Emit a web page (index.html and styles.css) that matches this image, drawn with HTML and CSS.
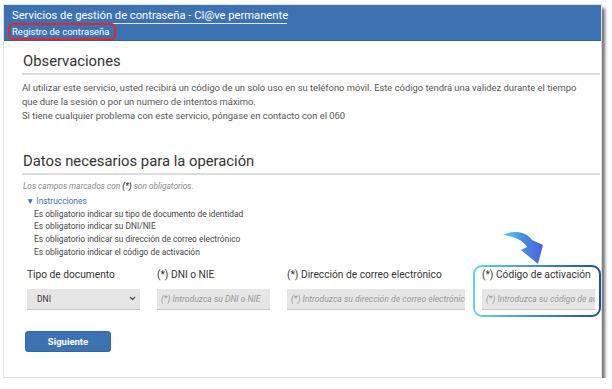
FILE: index.html
```html
<!DOCTYPE html>
<html lang="es">
<head>
    <meta charset="UTF-8">
    <title>Registro de contraseña</title>
    <link rel="stylesheet" href="styles.css">
</head>
<body>
    <div class="panel">
        <div class="header">
            <h1>Servicios de gestión de contraseña - Cl@ve permanente</h1>
            <span class="sub">Registro de contraseña</span>
        </div>
        <div class="content">
            <h2>Observaciones</h2>
            <p class="obs">Al utilizar este servicio, usted recibirá un código de un solo uso en su teléfono móvil. Este código tendrá una validez durante el tiempo<br>
            que dure la sesión o por un numero de intentos máximo.<br>
            Si tiene cualquier problema con este servicio, póngase en contacto con el 060</p>

            <h2 class="second">Datos necesarios para la operación</h2>
            <p class="note">Los campos marcados con <b>(*)</b> son obligatorios.</p>
            <div class="instr">
                <div class="instr-title">&#9660; Instrucciones</div>
                <ul>
                    <li>Es obligatorio indicar su tipo de documento de identidad</li>
                    <li>Es obligatorio indicar su DNI/NIE</li>
                    <li>Es obligatorio indicar su dirección de correo electrónico</li>
                    <li>Es obligatorio indicar el código de activación</li>
                </ul>
            </div>

            <div class="fields">
                <div class="field">
                    <label>Tipo de documento</label>
                    <div class="select">DNI
                        <svg width="7" height="5" viewBox="0 0 7 5"><path d="M1 1 L3.5 3.5 L6 1" fill="none" stroke="#555" stroke-width="1.4"/></svg>
                    </div>
                </div>
                <div class="field">
                    <label>(*) DNI o NIE</label>
                    <div class="input">(*) Introduzca su DNI o NIE</div>
                </div>
                <div class="field wide">
                    <label>(*) Dirección de correo electrónico</label>
                    <div class="input">(*) Introduzca su dirección de correo electrónico</div>
                </div>
                <div class="field mark">
                    <label>(*) Código de activación</label>
                    <div class="input">(*) Introduzca su código de activación</div>
                    <svg class="ring" width="128" height="52" viewBox="0 0 128 52">
                        <defs>
                            <linearGradient id="rg" x1="0" y1="0" x2="1" y2="0">
                                <stop offset="0" stop-color="#63d6e6"/>
                                <stop offset="1" stop-color="#1c4ea8"/>
                            </linearGradient>
                        </defs>
                        <rect x="1" y="1" width="126" height="50" rx="8" fill="none" stroke="url(#rg)" stroke-width="2"/>
                    </svg>
                    <svg class="arrow" width="50" height="40" viewBox="0 0 50 40">
                        <defs>
                            <linearGradient id="ag" x1="0" y1="0" x2="1" y2="0">
                                <stop offset="0" stop-color="#58d2e8"/>
                                <stop offset="0.5" stop-color="#4a8ee0"/>
                                <stop offset="1" stop-color="#4a5fdc"/>
                            </linearGradient>
                        </defs>
                        <path d="M5 7 C14 2 28 3 34 12 L45 17 L40 36 L23 22 L29 19 C24 11 14 8 5 7 Z" fill="url(#ag)"/>
                    </svg>
                </div>
            </div>

            <button class="btn">Siguiente</button>
        </div>
    </div>
</body>
</html>
```
FILE: styles.css
```css
body {
    margin: 0;
    padding: 4px 0 0 3px;
    background: #fff;
    font-family: Roboto, "Liberation Sans", sans-serif;
}
.panel {
    width: 597px;
    height: 372px;
    border: 1px solid #e2e2e2;
    background: #fff;
    box-shadow: 3px 4px 3px rgba(0, 0, 0, 0.55);
}
.header {
    background: #3d72b2;
    height: 36px;
    padding: 3px 0 0 4px;
    box-sizing: border-box;
    border-bottom: 1px solid #2f64a6;
}
.header h1 {
    margin: 0 0 0 4px;
    width: 275px;
    font-size: 11.2px;
    font-weight: 400;
    line-height: 15px;
    color: #fff;
    white-space: nowrap;
    border-bottom: 1px solid #dfe8f3;
}
.sub {
    display: block;
    width: fit-content;
    margin-top: -1px;
    padding: 0 4px 0 2px;
    border: 2px solid #e3262d;
    border-radius: 5px;
    font-size: 9.5px;
    line-height: 13px;
    color: #fff;
    white-space: nowrap;
}
.content {
    padding: 0 1px 0 18px;
}
h2 {
    margin: 11px 0 0;
    padding: 0 0 3px 1px;
    font-size: 14.8px;
    font-weight: 400;
    line-height: 18px;
    color: #333;
    border-bottom: 2px solid #dcdcdc;
}
h2.second {
    margin-top: 29px;
}
.obs {
    margin: 6px 0 0;
    font-size: 9.4px;
    line-height: 14px;
    color: #555;
    white-space: nowrap;
}
.note {
    margin: 6px 0 0 1px;
    font-size: 8.3px;
    font-style: italic;
    line-height: 11px;
    color: #888;
}
.note b {
    color: #444;
}
.instr {
    margin: 3px 0 0 4px;
    font-size: 8.4px;
    line-height: 12.7px;
}
.instr-title {
    color: #3d6eb8;
}
.instr ul {
    margin: 0;
    padding: 0 0 0 8px;
    list-style: none;
    color: #444;
}
.fields {
    display: flex;
    gap: 17px;
    margin: 9px 0 0 5px;
}
.field {
    width: 113px;
    position: relative;
}
.field.wide {
    width: 178px;
}
.field label {
    display: block;
    font-size: 10.2px;
    line-height: 13px;
    color: #333;
    white-space: nowrap;
}
.select, .input {
    margin-top: 8px;
    height: 21px;
    box-sizing: border-box;
    background: #e6e6e6;
    border-bottom: 1px solid #c8c8c8;
    overflow: hidden;
    white-space: nowrap;
}
.select {
    display: flex;
    justify-content: space-between;
    align-items: center;
    padding: 0 4px 0 10px;
    font-size: 8.5px;
    color: #333;
}
.input {
    padding: 0 4px;
    font-size: 8.6px;
    font-style: italic;
    line-height: 20px;
    color: #999;
}
.ring {
    position: absolute;
    left: -9px;
    top: -3px;
}
.arrow {
    position: absolute;
    left: 16px;
    top: -40px;
}
.btn {
    display: block;
    margin: 21px 0 0 3px;
    width: 86px;
    height: 21px;
    background: #3d72b2;
    border: 1px solid #34679f;
    border-radius: 3px;
    color: #fff;
    font-family: Roboto, "Liberation Sans", sans-serif;
    font-size: 9.5px;
    font-weight: 700;
}
```
